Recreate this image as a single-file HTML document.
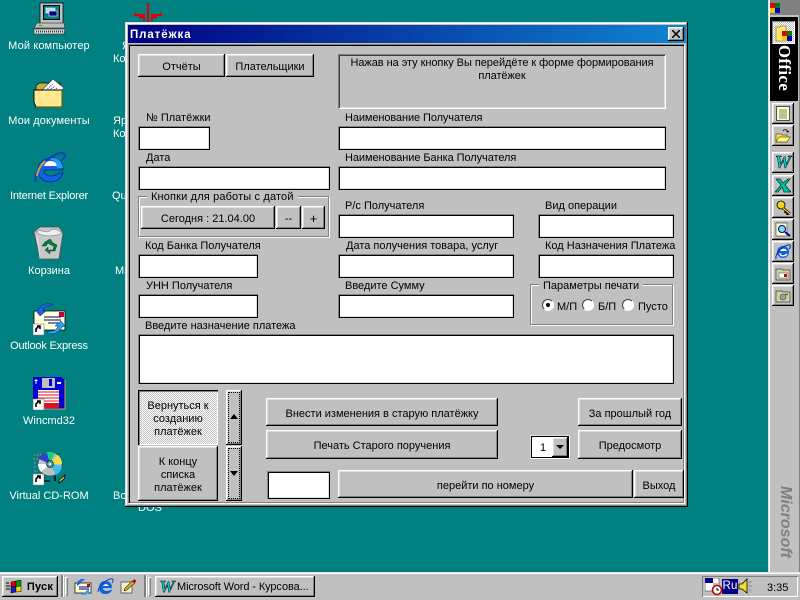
<!DOCTYPE html>
<html><head><meta charset="utf-8"><style>
html,body{margin:0;padding:0}
body{width:800px;height:600px;overflow:hidden;background:#008080;position:relative;font:11px/14px "Liberation Sans","DejaVu Sans",sans-serif;color:#000}
div,svg{position:absolute;box-sizing:border-box}
.t{white-space:nowrap;margin-top:1px}
.w{color:#fff;text-align:center;width:100px;white-space:nowrap;margin-top:1px}
.b{background:#c0c0c0;box-shadow:inset -1px -1px 0 #000,inset 1px 1px 0 #fff,inset -2px -2px 0 #808080,inset 2px 2px 0 #dfdfdf;display:flex;align-items:center;justify-content:center;text-align:center;white-space:nowrap;padding-top:3px}
.n{padding-top:0}
.i{background:#fff;box-shadow:inset 1px 1px 0 #808080,inset 2px 2px 0 #000,inset -1px -1px 0 #000,inset -2px -2px 0 #dfdfdf}
.g{border:1px solid #808080;box-shadow:inset 1px 1px 0 #fff,1px 1px 0 #fff}
.l{background:#c0c0c0;padding:0 4px;white-space:nowrap;margin-top:1px}
.r{width:12px;height:12px;border-radius:50%;background:#fff;border:1px solid;border-color:#404040 #fff #fff #404040}
</style></head><body>

<!-- desktop text behind window -->
<div class="w" style="left:-1px;top:38px;letter-spacing:.12px">Мой компьютер</div>
<div class="w" style="left:-1px;top:113px;letter-spacing:.1px">Мои документы</div>
<div class="w" style="left:-1px;top:188px;letter-spacing:-.2px">Internet Explorer</div>
<div class="w" style="left:-1px;top:263px">Корзина</div>
<div class="w" style="left:-1px;top:338px;letter-spacing:-.2px">Outlook Express</div>
<div class="w" style="left:-1px;top:413px">Wincmd32</div>
<div class="w" style="left:-1px;top:488px">Virtual CD-ROM</div>
<div class="t" style="left:122px;top:38px;color:#fff">Я</div>
<div class="t" style="left:113px;top:51px;color:#fff">Ко</div>
<div class="t" style="left:113px;top:113px;color:#fff">Яр</div>
<div class="t" style="left:113px;top:126px;color:#fff">Ко</div>
<div class="t" style="left:112px;top:188px;color:#fff">Qu</div>
<div class="t" style="left:115px;top:263px;color:#fff">Ма</div>
<div class="t" style="left:113px;top:488px;color:#fff">Во</div>
<div class="t" style="left:138px;top:500px;color:#fff">DOS</div>

<!-- red icon -->
<svg style="left:130px;top:0" width="36" height="24" viewBox="0 0 36 24"><path d="M18 3V22M14 21V15H5V13M22 21V15H31V13M9 17H14M22 17H27" stroke="#e00000" stroke-width="2" fill="none"/></svg>

<!-- My computer -->
<svg style="left:33px;top:2px" width="33" height="33" viewBox="0 0 33 33"><path d="M7 1H30V22H7Z" fill="#c0c0c0" stroke="#000" stroke-width=".7"/><rect x="10" y="3" width="17" height="15" fill="#000"/><rect x="11" y="4" width="15" height="13" fill="#008080"/><rect x="13" y="6" width="9" height="5" fill="#c0d0f0" stroke="#fff" stroke-width=".6"/><rect x="16" y="9" width="8" height="5" fill="#000080" stroke="#fff" stroke-width=".6"/><path d="M4 21H31L32 26H1Z" fill="#c0c0c0" stroke="#404040" stroke-width=".7"/><path d="M1 27H32L31 32H1Z" fill="#dfdfdf" stroke="#404040" stroke-width=".7"/><rect x="6" y="23" width="3" height="1" fill="#0c0"/><path d="M3 29.500H30" stroke="#333" stroke-width="2" stroke-dasharray="1 1"/></svg>

<!-- My documents -->
<svg style="left:33px;top:78px" width="33" height="31" viewBox="0 0 33 31"><path d="M3 8L6 5H27L29 10V14H3Z" fill="#c8b040" stroke="#000" stroke-width=".7"/><path d="M8 13L20 1L31 10L24 17Z" fill="#fff" stroke="#404040" stroke-width=".7"/><path d="M13 12L20 6M15 13L22 8M18 14L24 10" stroke="#2040c0" stroke-width="1" stroke-dasharray="1 1"/><path d="M1 12H29V29H3L1 24Z" fill="#ffe890" stroke="#000" stroke-width=".9"/><path d="M29 12V29H3" stroke="#706000" fill="none" stroke-width="1.200"/></svg>

<!-- IE -->
<svg style="left:33px;top:151px" width="33" height="34" viewBox="0 0 33 34"><path d="M17 7C25 6 30 11 30 19H11C11 23 14 25 18 25C21 25 24 24 26 22H30C28 28 23 31 17 31C9 31 5 25 5 19C5 12 10 8 17 7Z" fill="#1060e0" stroke="#002090" stroke-width=".7"/><path d="M11 15H24C24 12 21 10 17.500 10C14 10 12 12 11 15Z" fill="#fff"/><path d="M18 7C25 6 29 11 30 17H24C24 12 21 9 18 9Z" fill="#20a0f0"/><path d="M3 31C0 24 8 11 20 5C27 1 31 1 32 4C32 7 29 9 28 10" fill="none" stroke="#1040c0" stroke-width="2"/><path d="M4 25C5 18 8 14 12 10" stroke="#d0a040" stroke-width="2" fill="none"/></svg>

<!-- Recycle bin -->
<svg style="left:33px;top:226px" width="31" height="35" viewBox="0 0 31 35"><path d="M1 6L7 1H26L30 7L26 33H7Z" fill="#c8c8c8" stroke="#505050" stroke-width=".8"/><path d="M3 6C8 2 14 9 18 4C21 2 26 4 29 7C22 11 9 11 3 6Z" fill="#f0f0f0" stroke="#808080" stroke-width=".6"/><path d="M12 16L17 13L20 17L24 19L22 25H17V28L12 24L15 21V24H20L21 20L18 19L15 17L13 20L9 20Z" fill="#008040" stroke="#004020" stroke-width=".5"/><path d="M7 33L4 10" stroke="#fff" stroke-width="1" opacity=".6"/></svg>

<!-- Outlook -->
<svg style="left:33px;top:302px" width="33" height="34" viewBox="0 0 33 34"><path d="M1 9H32V28H1Z" fill="#ffffd8" stroke="#000" stroke-width=".8"/><rect x="26" y="10" width="5" height="5" fill="#c00040"/><path d="M11 15H28M11 18H28M15 21H28" stroke="#000080"/><path d="M5 8C8 2 16 0 20 3L16 4C12 4 11 6 10 9L13 9L7 14L3 9Z" fill="#2060e0" stroke="#002080" stroke-width=".5"/><path d="M29 25C26 31 18 34 14 30L18 29C22 29 24 27 25 24L22 24L28 19L32 24Z" fill="#30a0f0" stroke="#002080" stroke-width=".5"/><rect x="0" y="22" width="11" height="11" fill="#fff" stroke="#808080" stroke-width=".6"/><path d="M3 30V27L6 24M4 24H7V27" stroke="#000" stroke-width="1.600" fill="none"/></svg>

<!-- Wincmd -->
<svg style="left:33px;top:377px" width="33" height="33" viewBox="0 0 33 33"><rect x="3" y="3" width="30" height="30" fill="#808080"/><path d="M0 0H28L31 3V31H0Z" fill="#0000d8" stroke="#000060" stroke-width=".6"/><rect x="9" y="1" width="13" height="10" fill="#c0c0c0"/><rect x="16" y="2" width="3" height="7" fill="#0000d8"/><path d="M24 6H28" stroke="#fff" stroke-width="2"/><rect x="5" y="13" width="21" height="18" fill="#fff"/><path d="M5 15H26M5 18H26M5 21H26M5 24H26" stroke="#e01020"/><rect x="11" y="26" width="15" height="5" fill="#e01020"/><path d="M3 2V7M1.500 3.500H4.500" stroke="#fff"/><rect x="0" y="22" width="11" height="11" fill="#fff" stroke="#808080" stroke-width=".6"/><path d="M3 30V27L6 24M4 24H7V27" stroke="#000" stroke-width="1.600" fill="none"/></svg>

<!-- Virtual CD -->
<svg style="left:33px;top:452px" width="33" height="34" viewBox="0 0 33 34"><path d="M1 3H10M0 7H6M1 11H4M1 15H4M1 19H5" stroke="#808080" stroke-width="1.500" stroke-dasharray="2 1"/><circle cx="17" cy="12" r="12" fill="#c0c0c0" stroke="#333" stroke-width=".6"/><path d="M17 12L12 1A12 12 0 0 1 22 1Z" fill="#20d080"/><path d="M17 12L29 12A12 12 0 0 0 25 3Z" fill="#f0e040"/><path d="M17 12L23 23A12 12 0 0 0 29 14Z" fill="#40c0f0"/><path d="M17 12L5 12A12 12 0 0 0 8 20Z" fill="#fff"/><path d="M17 12L14 1A12 12 0 0 0 6 7Z" fill="#3040d0"/><circle cx="17" cy="12" r="3.500" fill="#40a0a0" stroke="#000" stroke-width=".6"/><circle cx="17" cy="12" r="1.300" fill="#fff"/><path d="M26 28L32 23L31 27L26 31Z" fill="#d0c040" stroke="#000" stroke-width=".8"/><path d="M11 22V29H17" stroke="#000" stroke-width="1.200" fill="none"/><path d="M22 24V29" stroke="#000" stroke-width="1.500"/><rect x="0" y="22" width="11" height="11" fill="#fff" stroke="#808080" stroke-width=".6"/><path d="M3 30V27L6 24M4 24H7V27" stroke="#000" stroke-width="1.600" fill="none"/></svg>

<!-- WINDOW -->
<div style="left:125px;top:22px;width:563px;height:485px;background:#c0c0c0;box-shadow:inset -1px -1px 0 #000,inset 1px 1px 0 #dfdfdf,inset -2px -2px 0 #808080,inset 2px 2px 0 #fff"></div>
<div style="left:128px;top:25px;width:558px;height:18px;background:linear-gradient(90deg,#000080,#1084d0)"></div>
<div style="left:130px;top:28px;color:#fff;font-weight:bold;font-size:11.500px;letter-spacing:.9px;white-space:nowrap">Платёжка</div>
<div class="b n" style="left:668px;top:27px;width:16px;height:14px"><svg style="left:4px;top:3px" width="8" height="8" viewBox="0 0 8 8"><path d="M0 0L8 8M8 0L0 8" stroke="#000" stroke-width="1.500"/></svg></div>
<div style="left:128px;top:44px;width:557px;height:460px;border:1px solid;border-color:#808080 #fff #fff #808080;box-shadow:inset 1px 1px 0 #000,inset -1px -1px 0 #808080"></div>

<div class="b" style="left:138px;top:54px;width:87px;height:23px">Отчёты</div>
<div class="b" style="left:226px;top:54px;width:88px;height:23px">Плательщики</div>
<div style="left:338px;top:54px;width:328px;height:55px;box-shadow:inset 1px 1px 0 #808080,inset -1px -1px 0 #fff,inset 2px 2px 0 #404040,inset -2px -2px 0 #dfdfdf"></div>
<div style="left:338px;top:57px;width:328px;text-align:center;letter-spacing:-.05px;line-height:13px">Нажав на эту кнопку Вы перейдёте к форме формирования<br>платёжек</div>

<div class="t" style="left:146px;top:110px">№ Платёжки</div>
<div class="i" style="left:138px;top:126px;width:72px;height:24px"></div>
<div class="t" style="left:146px;top:150px">Дата</div>
<div class="i" style="left:138px;top:166px;width:192px;height:24px"></div>
<div class="t" style="left:345px;top:110px;letter-spacing:-.1px">Наименование Получателя</div>
<div class="i" style="left:338px;top:126px;width:328px;height:24px"></div>
<div class="t" style="left:345px;top:150px;letter-spacing:-.07px">Наименование Банка Получателя</div>
<div class="i" style="left:338px;top:166px;width:328px;height:24px"></div>

<div class="g" style="left:138px;top:196px;width:191px;height:41px"></div>
<div class="l" style="left:147px;top:189px;letter-spacing:.15px">Кнопки для работы с датой</div>
<div class="b" style="left:141px;top:206px;width:134px;height:23px">Сегодня : 21.04.00</div>
<div class="b" style="left:276px;top:206px;width:25px;height:23px">--</div>
<div class="b" style="left:302px;top:206px;width:23px;height:23px;font-size:13px">+</div>

<div class="t" style="left:345px;top:198px">Р/с Получателя</div>
<div class="i" style="left:338px;top:214px;width:176px;height:24px"></div>
<div class="t" style="left:545px;top:198px">Вид операции</div>
<div class="i" style="left:538px;top:214px;width:136px;height:24px"></div>

<div class="t" style="left:145px;top:238px">Код Банка Получателя</div>
<div class="i" style="left:138px;top:254px;width:120px;height:24px"></div>
<div class="t" style="left:346px;top:238px">Дата получения товара, услуг</div>
<div class="i" style="left:338px;top:254px;width:176px;height:24px"></div>
<div class="t" style="left:545px;top:238px">Код Назначения Платежа</div>
<div class="i" style="left:538px;top:254px;width:136px;height:24px"></div>

<div class="t" style="left:146px;top:278px">УНН Получателя</div>
<div class="i" style="left:138px;top:294px;width:120px;height:24px"></div>
<div class="t" style="left:345px;top:278px">Введите Сумму</div>
<div class="i" style="left:338px;top:294px;width:176px;height:24px"></div>

<div class="g" style="left:530px;top:284px;width:143px;height:41px"></div>
<div class="l" style="left:539px;top:278px">Параметры печати</div>
<div class="r" style="left:542px;top:299px"></div><div style="left:546px;top:303px;width:4px;height:4px;background:#000;border-radius:50%"></div>
<div class="t" style="left:557px;top:299px">М/П</div>
<div class="r" style="left:582px;top:299px"></div>
<div class="t" style="left:598px;top:299px">Б/П</div>
<div class="r" style="left:622px;top:299px"></div>
<div class="t" style="left:638px;top:299px">Пусто</div>

<div class="t" style="left:145px;top:318px">Введите назначение платежа</div>
<div class="i" style="left:138px;top:334px;width:536px;height:50px"></div>

<!-- bottom -->
<div class="b" style="left:138px;top:390px;width:80px;height:55px;padding-top:4px;white-space:normal;line-height:13px;background:repeating-conic-gradient(#fff 0 25%,#c0c0c0 0 50%) 0 0/2px 2px;box-shadow:inset 1px 1px 0 #000,inset 2px 2px 0 #808080,inset -1px -1px 0 #fff">Вернуться к<br>созданию<br>платёжек</div>
<div class="b" style="left:138px;top:446px;width:80px;height:55px;padding-top:4px;line-height:13px">К концу<br>списка<br>платёжек</div>
<div class="b n" style="left:226px;top:390px;width:16px;height:55px"></div>
<div style="left:228px;top:392px;width:12px;height:51px;border:1px dotted #000"></div>
<svg style="left:230px;top:414px" width="8" height="5"><path d="M4 0L8 5H0Z" fill="#000"/></svg>
<div class="b n" style="left:226px;top:446px;width:16px;height:55px"></div>
<div style="left:228px;top:448px;width:12px;height:51px;border:1px dotted #000"></div>
<svg style="left:230px;top:471px" width="8" height="5"><path d="M0 0H8L4 5Z" fill="#000"/></svg>

<div class="b" style="left:266px;top:398px;width:232px;height:28px">Внести изменения в старую платёжку</div>
<div class="b" style="left:266px;top:430px;width:232px;height:29px;padding-top:2px">Печать Старого поручения</div>
<div class="i" style="left:267px;top:471px;width:63px;height:28px"></div>
<div class="b" style="left:338px;top:470px;width:295px;height:28px">перейти по номеру</div>
<div class="b" style="left:634px;top:470px;width:50px;height:28px">Выход</div>
<div class="b" style="left:578px;top:398px;width:104px;height:28px">За прошлый год</div>
<div class="b" style="left:578px;top:430px;width:104px;height:29px;padding-top:2px">Предосмотр</div>
<div class="i" style="left:530px;top:435px;width:40px;height:24px;box-shadow:inset 1px 1px 0 #dfdfdf,inset -1px -1px 0 #fff,inset 2px 2px 0 #000,inset -2px -2px 0 #000"></div>
<div class="t" style="left:540px;top:440px">1</div>
<div class="b n" style="left:552px;top:437px;width:16px;height:20px"><svg style="left:4px;top:8px" width="8" height="4"><path d="M0 0H8L4 4Z" fill="#000"/></svg></div>

<!-- Office bar -->
<div style="left:768px;top:0;width:32px;height:572px;background:#c0c0c0;box-shadow:inset 1px 0 0 #dfdfdf,inset 2px 0 0 #fff,inset -1px 0 0 #808080"></div>
<div style="left:770px;top:0;width:29px;height:15px;background:#808080"></div>
<svg style="left:770px;top:3px" width="10" height="10"><rect width="5" height="5" fill="#e00000"/><rect x="5" width="5" height="5" fill="#008000"/><rect y="5" width="5" height="5" fill="#e8d000"/><rect x="5" y="5" width="5" height="5" fill="#0000c0"/></svg>
<div style="left:770px;top:17px;width:28px;height:84px;background:#000"></div>
<div style="left:772px;top:21px;width:23px;height:23px;background:repeating-conic-gradient(#fff 0 25%,#c0c0c0 0 50%) 0 0/2px 2px;border:1px solid;border-color:#808080 #fff #fff #808080"></div>
<svg style="left:775px;top:24px" width="18" height="18" viewBox="0 0 18 18"><path d="M1 3H5L6 2H11V17H1Z" fill="#ffe870" stroke="#806000" stroke-width=".6"/><rect x="7" y="7" width="5" height="5" fill="#e00000"/><rect x="12" y="7" width="5" height="5" fill="#008000"/><rect x="7" y="12" width="5" height="5" fill="#e8d000"/><rect x="12" y="12" width="5" height="5" fill="#0000c0"/></svg>
<div style="left:752px;top:58px;width:64px;height:20px;color:#fff;font:bold 17px/20px 'Liberation Serif',serif;text-align:center;transform:rotate(90deg);letter-spacing:.3px">Office</div>

<div class="b n" style="left:772px;top:103px;width:22px;height:21px"><svg style="left:4px;top:3px" width="15" height="15" viewBox="0 0 15 15"><rect x=".5" y=".5" width="13" height="14" fill="#ffffc0" stroke="#505050"/><path d="M3 4H11M3 6H11M3 8H11M3 10H11M3 12H11" stroke="#808080"/></svg></div>
<div class="b n" style="left:772px;top:125px;width:22px;height:21px"><svg style="left:3px;top:3px" width="16" height="15" viewBox="0 0 16 15"><path d="M1 6H6L7 7H12V14H1Z" fill="#ffe860" stroke="#605000" stroke-width=".7"/><path d="M1 14L4 9H15L12 14Z" fill="#ffff90" stroke="#605000" stroke-width=".7"/><path d="M8 3C9 1 12 1 13 4L14 3M13 4L11.500 3.500" fill="none" stroke="#000" stroke-width=".8"/></svg></div>
<div class="b n" style="left:772px;top:152px;width:22px;height:21px"><div style="left:2px;top:2px;width:18px;height:17px;font:italic bold 18px/17px 'Liberation Serif',serif;color:#00d0d0;-webkit-text-stroke:.5px #000;text-align:center">W</div></div>
<div class="b n" style="left:772px;top:175px;width:22px;height:21px"><svg style="left:3px;top:3px" width="16" height="15" viewBox="0 0 16 15"><path d="M1 1H5L8 5L13 1H15L10 7L15 13H16V14H9L7 9L3 14H0L6 7Z" fill="#00c0a0" stroke="#003030" stroke-width=".7"/></svg></div>
<div class="b n" style="left:772px;top:197px;width:22px;height:21px"><svg style="left:3px;top:3px" width="17" height="15" viewBox="0 0 17 15"><circle cx="6" cy="5" r="4" fill="#f0d020" stroke="#000" stroke-width=".8"/><path d="M8 8L15 14M11 11L10 13M13 13L12 15" stroke="#000" stroke-width="2.500"/><path d="M8 8L15 14" stroke="#f0d020" stroke-width="1.200"/></svg></div>
<div class="b n" style="left:772px;top:219px;width:22px;height:21px"><svg style="left:3px;top:3px" width="16" height="15" viewBox="0 0 16 15"><path d="M1 1H12V14H1Z" fill="#ffffd0" stroke="#505050" stroke-width=".7"/><circle cx="7" cy="7" r="3.500" fill="#80e0f0" stroke="#000080"/><path d="M10 10L15 14" stroke="#0000a0" stroke-width="2"/></svg></div>
<div class="b n" style="left:772px;top:241px;width:22px;height:21px"><svg style="left:3px;top:3px" width="16" height="16" viewBox="0 0 16 16"><circle cx="8" cy="8" r="6" fill="#1060e0"/><path d="M5 7H12C11 4 6 4 5 7Z" fill="#fff"/><path d="M5 9C5 12 9 13 12 10" stroke="#fff" stroke-width="1.300" fill="none"/><path d="M1 15C0 10 6 3 13 1C16 0 16 3 14 5" stroke="#0030a0" fill="none"/></svg></div>
<div class="b n" style="left:772px;top:263px;width:22px;height:21px"><svg style="left:3px;top:3px" width="16" height="15" viewBox="0 0 16 15"><path d="M1 3H7L8 4H15V14H1Z" fill="#d0d0a0" stroke="#404040" stroke-width=".7"/><rect x="4" y="7" width="9" height="5" fill="#fff" stroke="#404040" stroke-width=".5"/><rect x="9" y="8" width="3" height="3" fill="#c00000"/></svg></div>
<div class="b n" style="left:772px;top:285px;width:22px;height:21px"><svg style="left:3px;top:3px" width="16" height="15" viewBox="0 0 16 15"><path d="M1 3H7L8 4H15V14H1Z" fill="#d0d0a0" stroke="#404040" stroke-width=".7"/><circle cx="8" cy="9" r="3" fill="#a0a0a0" stroke="#404040" stroke-width=".6"/><path d="M10 7L13 6" stroke="#404040"/></svg></div>
<div style="left:750px;top:511px;width:70px;height:20px;color:#808080;font:italic bold 16px/20px 'Liberation Sans',sans-serif;text-align:center;transform:rotate(90deg);white-space:nowrap">Microsoft</div>

<!-- Taskbar -->
<div style="left:0;top:572px;width:800px;height:28px;background:#c0c0c0;box-shadow:inset 0 1px 0 #dfdfdf,inset 0 2px 0 #fff"></div>
<div class="b n" style="left:2px;top:576px;width:56px;height:21px;font-weight:bold;padding-left:20px;letter-spacing:.2px">Пуск</div>
<svg style="left:6px;top:580px" width="18" height="14" viewBox="0 0 18 14"><path d="M0 3H3M0 6H4M0 9H4" stroke="#000"/><path d="M5 2L10 1V6.500L5 7Z" fill="#e00000" stroke="#000" stroke-width=".5"/><path d="M10 1L15 0V6L10 6.500Z" fill="#00a000" stroke="#000" stroke-width=".5"/><path d="M5 7L10 6.500V12L5 13Z" fill="#1020d0" stroke="#000" stroke-width=".5"/><path d="M10 6.500L15 6V11.500L10 12Z" fill="#f0e000" stroke="#000" stroke-width=".5"/></svg>
<div style="left:61px;top:575px;width:2px;height:22px;background:#808080;box-shadow:1px 0 0 #fff"></div>
<div style="left:65px;top:577px;width:3px;height:19px;background:#c0c0c0;box-shadow:inset 1px 1px 0 #fff,inset -1px -1px 0 #808080"></div>
<svg style="left:74px;top:578px" width="18" height="18" viewBox="0 0 18 18"><path d="M1 5H17V15H1Z" fill="#ffffd0" stroke="#000" stroke-width=".7"/><rect x="13" y="6" width="3" height="3" fill="#c00040"/><path d="M5 9H15M5 11H15" stroke="#000080"/><path d="M3 5C5 1 9 0 11 2L8 3L7 5L3 8Z" fill="#2060e0"/><path d="M15 14C13 17 9 18 7 16L10 15L12 13L15 11Z" fill="#30a0f0"/></svg>
<svg style="left:97px;top:578px" width="17" height="17" viewBox="0 0 17 17"><path d="M8 3C13 3 15 6 15 10H6C6 12 8 13 10 13C11.500 13 13 12.500 14 11.500H15C14 15 11 16 8 16C4 16 2 13 2 10C2 6 4 3 8 3Z" fill="#1060e0"/><path d="M6 8H11.500C11 5.500 7 5.500 6 8Z" fill="#fff"/><path d="M1 14C1 9 7 3 13 1C16 0 17 2 15 5" stroke="#1040c0" fill="none"/></svg>
<svg style="left:120px;top:578px" width="17" height="17" viewBox="0 0 17 17"><path d="M1 4H12V15H1Z" fill="#f0f0d0" stroke="#404040" stroke-width=".7"/><path d="M5 10L12 3L15 5L7 12L4 13Z" fill="#d0a020" stroke="#000" stroke-width=".5"/><path d="M12 3L15 1L16 3L15 5Z" fill="#c00000"/></svg>
<div style="left:144px;top:575px;width:2px;height:22px;background:#808080;box-shadow:1px 0 0 #fff"></div>
<div style="left:148px;top:577px;width:3px;height:19px;background:#c0c0c0;box-shadow:inset 1px 1px 0 #fff,inset -1px -1px 0 #808080"></div>
<div class="b n" style="left:155px;top:576px;width:160px;height:21px;justify-content:flex-start;padding-left:22px;letter-spacing:-.1px;overflow:hidden">Microsoft Word - Курсова...</div>
<div style="left:158px;top:579px;width:18px;height:15px;font:italic bold 17px/15px 'Liberation Serif',serif;color:#00d0d0;-webkit-text-stroke:.5px #000;text-align:center">W</div>

<div style="left:702px;top:576px;width:96px;height:21px;box-shadow:inset 1px 1px 0 #808080,inset -1px -1px 0 #fff"></div>
<svg style="left:705px;top:578px" width="18" height="18" viewBox="0 0 18 18"><rect x="0" y="0" width="14" height="13" fill="#fff" stroke="#404040" stroke-width=".6"/><rect x="0" y="0" width="8" height="5" fill="#000080"/><rect x="8" y="5" width="6" height="6" fill="#c0c0c0"/><circle cx="12" cy="12" r="4.500" fill="#fff" stroke="#c00000" stroke-width="1.600"/><path d="M12 10V12H14" stroke="#000" fill="none"/></svg>
<div style="left:722px;top:579px;width:16px;height:15px;background:#000080;color:#fff;font:11.500px/15px 'Liberation Sans',sans-serif;text-align:center;letter-spacing:.2px">Ru</div>
<svg style="left:738px;top:578px" width="17" height="17" viewBox="0 0 17 17"><path d="M1 6H4L9 1V15L4 11H1Z" fill="#f0e030" stroke="#000" stroke-width=".8"/><path d="M11 5L13 3M11 8H14M11 11L13 13" stroke="#808080"/></svg>
<div class="t" style="left:767px;top:580px">3:35</div>

</body></html>
